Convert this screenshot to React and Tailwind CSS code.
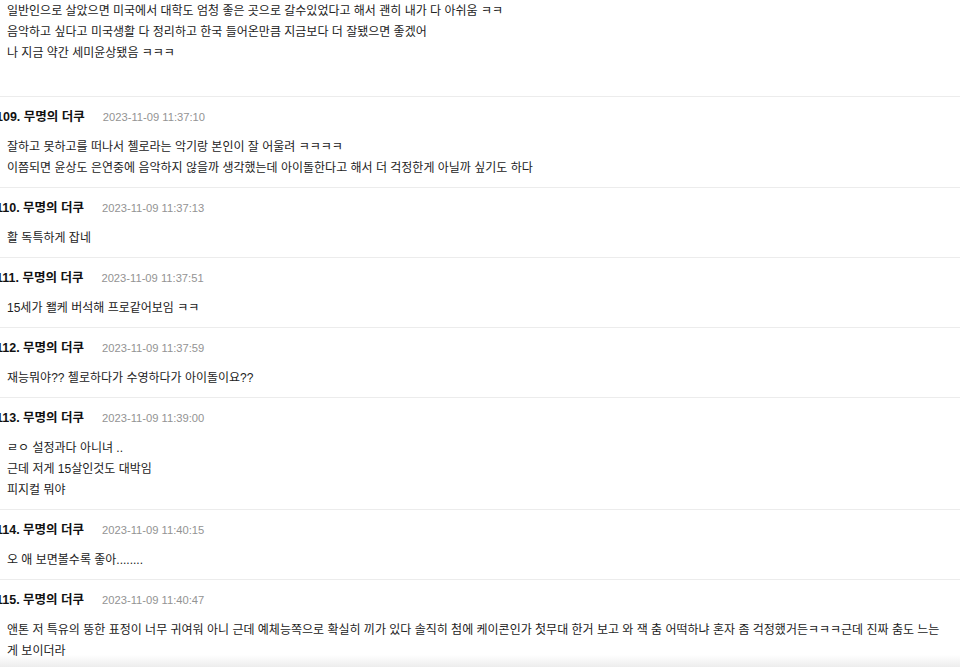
const comments = [
  {
    no: 109,
    date: '2023-11-09 11:37:10',
    lines: [
      '잘하고 못하고를 떠나서 첼로라는 악기랑 본인이 잘 어울려 ㅋㅋㅋㅋ',
      '이쯤되면 윤상도 은연중에 음악하지 않을까 생각했는데 아이돌한다고 해서 더 걱정한게 아닐까 싶기도 하다',
    ],
  },
  { no: 110, date: '2023-11-09 11:37:13', lines: ['활 독특하게 잡네'] },
  { no: 111, date: '2023-11-09 11:37:51', lines: ['15세가 왤케 버석해 프로같어보임 ㅋㅋ'] },
  { no: 112, date: '2023-11-09 11:37:59', lines: ['재능뭐야?? 첼로하다가 수영하다가 아이돌이요??'] },
  {
    no: 113,
    date: '2023-11-09 11:39:00',
    lines: ['ㄹㅇ 설정과다 아니녀 ..', '근데 저게 15살인것도 대박임', '피지컬 뭐야'],
  },
  { no: 114, date: '2023-11-09 11:40:15', lines: ['오 애 보면볼수록 좋아........'] },
  {
    no: 115,
    date: '2023-11-09 11:40:47',
    lines: [
      '앤톤 저 특유의 뚱한 표정이 너무 귀여워 아니 근데 예체능쪽으로 확실히 끼가 있다 솔직히 첨에 케이콘인가 첫무대 한거 보고 와 잭 춤 어떡하냐 혼자 좀 걱정했거든ㅋㅋㅋ근데 진짜 춤도 느는 게 보이더라',
    ],
  },
]

const font = { fontFamily: '"Liberation Sans", "Noto Sans CJK KR", sans-serif' }

export default function App() {
  return (
    <div className="relative h-[667px] w-[960px] overflow-hidden bg-white text-[12px] text-[#222]" style={font}>
      <div className="pl-[7px] pt-[1px] pb-[32px] leading-[21px]">
        <p>일반인으로 살았으면 미국에서 대학도 엄청 좋은 곳으로 갈수있었다고 해서 괜히 내가 다 아쉬움 ㅋㅋ</p>
        <p>음악하고 싶다고 미국생활 다 정리하고 한국 들어온만큼 지금보다 더 잘됐으면 좋겠어</p>
        <p>나 지금 약간 세미윤상됐음 ㅋㅋㅋ</p>
      </div>

      {comments.map((c) => (
        <div key={c.no} className="border-t border-[#ececec] pt-[10px] pb-[8px]">
          <div className="-ml-1 flex h-5 items-center leading-5">
            <span className="text-[12.5px] font-bold text-[#111]">{c.no}. 무명의 더쿠</span>
            <span className="ml-[18px] text-[11.2px] text-[#939393]">{c.date}</span>
          </div>
          <div className="mt-[10px] pl-[7px] pr-2 leading-[21px]">
            {c.lines.map((line, i) => (
              <p key={i}>{line}</p>
            ))}
          </div>
        </div>
      ))}

      <div className="pointer-events-none absolute bottom-0 left-0 h-[12px] w-full bg-gradient-to-b from-white/0 to-[#ededed]" />
    </div>
  )
}
